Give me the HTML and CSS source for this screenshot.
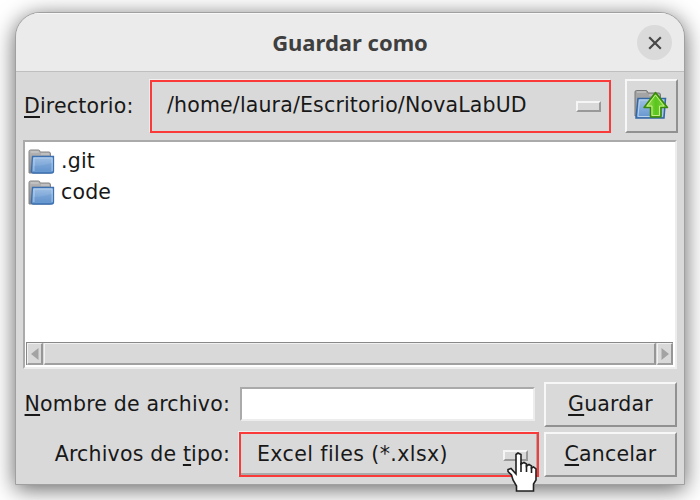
FILE: index.html
```html
<!DOCTYPE html>
<html lang="es">
<head>
<meta charset="utf-8">
<title>Guardar como</title>
<link rel="stylesheet" href="styles.css">
</head>
<body>
<svg width="0" height="0" class="defs">
  <defs>
    <linearGradient id="blue" x1="0" y1="0" x2="0" y2="1"><stop offset="0" stop-color="#9fc0e4"/><stop offset="1" stop-color="#6495cf"/></linearGradient>
    <linearGradient id="grey" x1="0" y1="0" x2="0" y2="1"><stop offset="0" stop-color="#b8b8b8"/><stop offset="1" stop-color="#858585"/></linearGradient>
    <linearGradient id="green" x1="0" y1="0" x2="1" y2="0"><stop offset="0" stop-color="#b5e66b"/><stop offset=".5" stop-color="#58c51c"/><stop offset="1" stop-color="#8bd844"/></linearGradient>
    <symbol id="folder" viewBox="0 0 27 26">
      <path d="M1 24V2.5Q1 1 2.5 1H10.5Q12 1 12 3H21Q22.500 3 22.500 5V24Z" fill="url(#grey)" stroke="#858585"/>
      <path d="M3 3H10.500M13 5H21" stroke="#cecece" fill="none"/>
      <path d="M4.500 7.500H25.500V22Q25.500 24 23.500 24H5Q3 24 3.500 21Z" fill="url(#blue)" stroke="#3c70b0" stroke-width="1.300"/>
      <path d="M6 22V9H24V22" fill="none" stroke="#b5d0ec"/>
      <path d="M6 17Q14 17 24 14V22H6Z" fill="#578bc8" opacity=".25"/>
    </symbol>
  </defs>
</svg>
<main class="window">
  <header class="titlebar">
    <h1>Guardar como</h1>
    <button class="close" aria-label="Cerrar"><svg width="14" height="14" viewBox="0 0 14 14"><path d="M1.200 1.200L12.800 12.800M12.800 1.200L1.200 12.800" stroke="#484848" stroke-width="2.200"/></svg></button>
  </header>
  <section class="content">
    <div class="directory">
      <label><u>D</u>irectorio:</label>
      <div class="select path"><span>/home/laura/Escritorio/NovaLabUD</span><i class="mark"></i></div>
      <button class="raised up" aria-label="Subir"><svg width="36" height="32" viewBox="0 0 36 32">
        <path d="M2 28V4Q2 2.500 3.500 2.500H13Q14.500 2.500 15 5H26Q27.500 5 27.500 7V28Z" fill="#a4a4a4" stroke="#777"/>
        <path d="M4 4H13M16 7H26" stroke="#cdcdcd"/>
        <path d="M5 10.500H32.500L31 30H3Z" fill="url(#blue)" stroke="#3467a4" stroke-width="1.500"/>
        <path d="M6.500 12H30.500L29.500 28.500H5Z" fill="none" stroke="#b7d1ec"/>
        <path d="M22.500 4.500L34.500 19.500H28V29H17.500V19.500H11Z" fill="url(#green)" stroke="#39870c" stroke-width="1.500" stroke-linejoin="round"/>
        <path d="M22.500 7L31 18H26.500V27.500H19V18H14Z" fill="none" stroke="#c6ee87"/>
      </svg></button>
    </div>
    <div class="files">
      <ul>
        <li><svg width="27" height="26"><use href="#folder"/></svg><span>.git</span></li>
        <li><svg width="27" height="26"><use href="#folder"/></svg><span>code</span></li>
      </ul>
      <div class="scrollbar">
        <span class="arrow"><svg width="8" height="12" viewBox="0 0 8 12"><path d="M7.500 0V12L0 6Z" fill="#a3a3a3"/></svg></span>
        <span class="thumb"></span>
        <span class="arrow"><svg width="8" height="12" viewBox="0 0 8 12"><path d="M.5 0V12L8 6Z" fill="#a3a3a3"/></svg></span>
      </div>
    </div>
    <div class="form">
      <label><u>N</u>ombre de archivo:</label>
      <input class="name" aria-label="Nombre de archivo">
      <button class="raised save"><span><u>G</u>uardar</span></button>
      <label>Archivos de <u>t</u>ipo:</label>
      <div class="select type"><span>Excel files (*.xlsx)</span><i class="mark"></i></div>
      <button class="raised cancel"><span><u>C</u>ancelar</span></button>
    </div>
  </section>
</main>
<svg class="pointer" width="30" height="41" viewBox="0 0 30 41">
  <path d="M9 2.500L11 1L14 2.500V12L17 10.500L19.500 12V14L22 12.500L24.500 14V16L26.500 15L29 17V28L26.500 32V39H9.500V34L6 28L4.500 23L1 19.500V17.500L4 16.500L9 22Z" fill="#fff" stroke="#202020" stroke-width="1.600"/>
  <path d="M14 11V20M19.500 13V20M24.500 15V21" stroke="#202020" stroke-width="1.600"/>
</svg>
</body>
</html>
```
FILE: styles.css
```css
* { box-sizing: border-box; }
body {
  margin: 0;
  width: 700px;
  height: 500px;
  overflow: hidden;
  padding: 12px 15px 15px;
  background: #fff;
  color: #181818;
  font: 20.5px/30px "DejaVu Sans", sans-serif;
  letter-spacing: .18px;
}
.defs { position: absolute; }
button { font: inherit; letter-spacing: inherit; color: inherit; padding: 0; margin: 0; }
.window {
  height: 473px;
  border: 1.5px solid #a0a0a0;
  border-radius: 25px 25px 0 0;
  background: #d9d9d9;
  box-shadow: 0 4px 22px rgba(0,0,0,.62);
  overflow: hidden;
}
.titlebar {
  height: 59px;
  display: grid;
  grid-template-columns: 1fr 35px;
  align-items: center;
  padding-right: 12px;
  background: #ebebeb;
  border-top: 1px solid #f8f8f8;
  border-bottom: 1px solid #bfbfbf;
}
h1 {
  margin: 0 0 1px 47px;
  text-align: center;
  color: #3f3f3f;
  font: bold 22px/30px "Noto Sans", sans-serif;
  letter-spacing: 0;
}
.close {
  width: 35px;
  height: 35px;
  border: 0;
  border-radius: 50%;
  background: #dadada;
  display: grid;
  place-items: center;
}
.content { padding: 7px 7px 0 7px; }
.directory {
  display: grid;
  grid-template-columns: 127px 461px 53px;
  column-gap: 0;
  height: 54px;
  align-items: center;
}
.directory label { padding-left: 1px; }
.directory .up { margin-left: 14px; width: 53px; }
u { text-decoration: underline; text-decoration-thickness: 1.5px; text-underline-offset: 3px; text-decoration-skip-ink: none; }
.select {
  display: flex;
  align-items: center;
  justify-content: space-between;
  border: 2px solid #fa3939;
}
.path { height: 53px; padding: 0 8px 2px 15px; box-shadow: -1px -1px #f0f0f0; }
.path span { letter-spacing: .16px; }
.mark {
  width: 25px;
  height: 11px;
  border: 2px solid;
  border-color: #f5f5f5 #999 #999 #f5f5f5;
}
.path .mark { margin-top: 2px; }
.type .mark { margin-top: 3px; margin-right: 1px; }
.raised {
  border: 2px solid;
  border-color: #f7f7f7 #919191 #919191 #f7f7f7;
  background: #d9d9d9;
}
.up { height: 54px; display: grid; place-items: center; }
.up svg { margin: 0 2px 4px 0; }
.files {
  height: 229px;
  margin-top: 7px;
  border: 2px solid;
  border-color: #aaa #ededed #ededed #aaa;
  background: #fff;
  display: flex;
  flex-direction: column;
  justify-content: space-between;
}
ul { list-style: none; margin: 0; padding: 4px 3px; }
li { display: flex; align-items: center; height: 30.5px; gap: 6px; }
li svg { margin-top: 2px; }
.scrollbar {
  height: 23px;
  display: grid;
  grid-template-columns: 16px 1fr 16px;
  gap: 1px;
  margin: 0 2px 2px 1px;
  border-top: 1px solid #888;
  border-left: 1px solid #888;
  background: #d9d9d9;
}
.arrow, .thumb { border: 1px solid; border-color: #f1f1f1 #969696 #a0a0a0 #f1f1f1; border-right-width: 2px; border-bottom-width: 2px; }
.arrow { display: grid; place-items: center; }
.form {
  display: grid;
  grid-template-columns: 216px 300px 133px;
  grid-template-rows: 46px 46px;
  row-gap: 4px;
  column-gap: 0;
  align-items: center;
  margin-top: 12px;
}
.form label { text-align: right; padding-right: 9px; white-space: nowrap; }
.name {
  width: 295px;
  height: 34px;
  margin-left: 1px;
  border: 2px solid;
  border-color: #aaa #ededed #ededed #aaa;
  background: #fff;
  padding: 0 4px;
  font: inherit;
}
.type { height: 45px; padding: 0 8px 1px 16px; box-shadow: inset -1px -2px #aaa, -1px -1px #eee; }
.type span { letter-spacing: .42px; }
.form .raised { margin-left: 5px; width: 133px; height: 45px; }
.pointer { position: absolute; left: 507px; top: 452px; fill: none; }
```
